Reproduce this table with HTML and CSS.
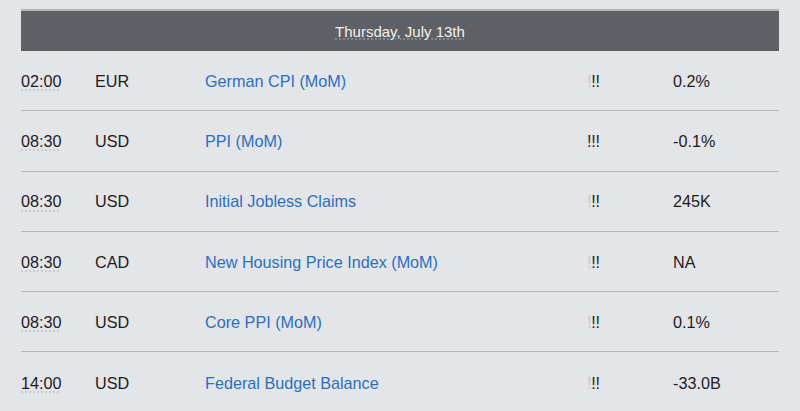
FILE: index.html
```html
<!DOCTYPE html>
<html lang="en">
<head>
<meta charset="utf-8">
<title>Economic Calendar</title>
<link rel="stylesheet" href="styles.css">
</head>
<body>
<div class="calendar">
  <div class="day-header"><abbr class="day-title" title="Thursday, July 13th">Thursday, July 13th</abbr></div>
  <div class="row">
    <abbr class="time" title="02:00 GMT">02:00</abbr>
    <span class="cur">EUR</span>
    <a class="event" href="#">German CPI (MoM)</a>
    <span class="impact"><span class="off">!</span>!!</span>
    <span class="val">0.2%</span>
  </div>
  <div class="row">
    <abbr class="time" title="08:30 GMT">08:30</abbr>
    <span class="cur">USD</span>
    <a class="event" href="#">PPI (MoM)</a>
    <span class="impact">!!!</span>
    <span class="val">-0.1%</span>
  </div>
  <div class="row">
    <abbr class="time" title="08:30 GMT">08:30</abbr>
    <span class="cur">USD</span>
    <a class="event" href="#">Initial Jobless Claims</a>
    <span class="impact"><span class="off">!</span>!!</span>
    <span class="val">245K</span>
  </div>
  <div class="row">
    <abbr class="time" title="08:30 GMT">08:30</abbr>
    <span class="cur">CAD</span>
    <a class="event" href="#">New Housing Price Index (MoM)</a>
    <span class="impact"><span class="off">!</span>!!</span>
    <span class="val">NA</span>
  </div>
  <div class="row">
    <abbr class="time" title="08:30 GMT">08:30</abbr>
    <span class="cur">USD</span>
    <a class="event" href="#">Core PPI (MoM)</a>
    <span class="impact"><span class="off">!</span>!!</span>
    <span class="val">0.1%</span>
  </div>
  <div class="row">
    <abbr class="time" title="14:00 GMT">14:00</abbr>
    <span class="cur">USD</span>
    <a class="event" href="#">Federal Budget Balance</a>
    <span class="impact"><span class="off">!</span>!!</span>
    <span class="val">-33.0B</span>
  </div>
</div>
</body>
</html>
```
FILE: styles.css
```css
html, body {
  margin: 0;
  padding: 0;
  background: #e4e5e9;
  font-family: "Liberation Sans", Arial, Helvetica, sans-serif;
  color: #1c1c1e;
}

.calendar {
  margin: 9px 21px 0 21px;
  width: 758px;
}

.day-header {
  border-top: 2px solid #b4b5b9;
  background: #5f6065;
  height: 40px;
  display: flex;
  align-items: center;
  justify-content: center;
}

.day-title {
  color: #f2f2f2;
  font-size: 15px;
  text-decoration: underline dotted rgba(255, 255, 255, 0.35);
  text-underline-offset: 2px;
}

.row {
  display: grid;
  grid-template-columns: 74px 110px 382px 86px 1fr;
  align-items: center;
  height: 60.3px;
  padding-top: 1px;
  box-sizing: border-box;
  border-bottom: 1px solid #b7b8bc;
  font-size: 16.2px;
}

.row:last-child {
  border-bottom: none;
}

.time {
  text-decoration: underline dotted #c6c7cb;
  text-underline-offset: 3px;
}

.event {
  color: #2b6fbd;
  text-decoration: none;
}

.impact {
  color: #1c1c1e;
  letter-spacing: -0.2px;
}

.impact .off {
  color: #c5c6ca;
}
```
